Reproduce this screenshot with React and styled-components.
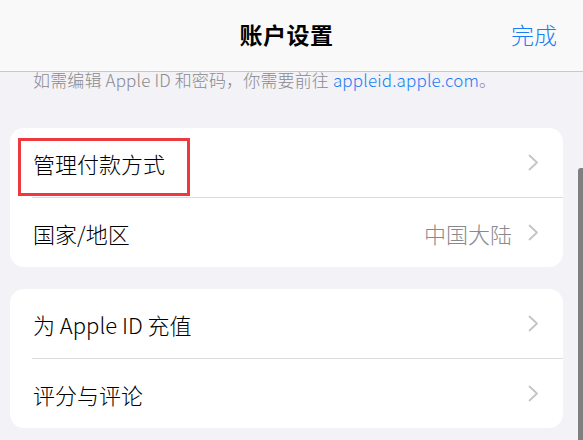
import React from 'react';
import styled, { createGlobalStyle } from 'styled-components';

const GlobalStyle = createGlobalStyle`
  html, body {
    margin: 0;
    padding: 0;
    background: #f2f2f7;
    overflow: hidden;
  }
  body {
    font-family: "Noto Sans CJK SC", Inter, "Noto Sans", sans-serif;
    -webkit-font-smoothing: antialiased;
  }
`;

const groups = [
  [
    { label: '管理付款方式', marked: true },
    { label: '国家/地区', value: '中国大陆' },
  ],
  [
    { label: '为 Apple ID 充值' },
    { label: '评分与评论' },
  ],
];

const Chevron = () => (
  <svg width="11" height="17" viewBox="0 0 11 17" fill="none">
    <path d="M1.5 1.5 L9 8.5 L1.5 15.5" stroke="#c4c4c7" strokeWidth="1.8" strokeLinecap="round" strokeLinejoin="round" />
  </svg>
);

const App = () => {
  const groupList = groups.map((rows, gi) => (
    <Card key={gi}>
      {rows.map((row, ri) => (
        <Row key={ri} $first={ri === 0}>
          <Label>{row.label}</Label>
          {row.value ? <Value>{row.value}</Value> : null}
          <Chevron />
          {row.marked ? <Highlight /> : null}
        </Row>
      ))}
    </Card>
  ));

  return (
    <Page>
      <GlobalStyle />
      <NavBar>
        <span />
        <Title>账户设置</Title>
        <Done>完成</Done>
      </NavBar>
      <Footnote>
        如需编辑 Apple ID 和密码，你需要前往 <a>appleid.apple.com</a>。
      </Footnote>
      <Groups>{groupList}</Groups>
      <ScrollThumb />
    </Page>
  );
};

const Page = styled.div`
  position: relative;
  width: 583px;
  height: 440px;
  overflow: hidden;
  background: #f2f2f7;
`;

const NavBar = styled.div`
  display: grid;
  grid-template-columns: 1fr auto 1fr;
  align-items: center;
  height: 71px;
  padding: 0 26px 0 16px;
  background: #f9f9f9;
  border-bottom: 1px solid #c8c8cc;
`;

const Title = styled.h1`
  margin: 0;
  font-size: 23px;
  font-weight: 700;
  color: #000;
  letter-spacing: 0.5px;
  line-height: 1;
  padding-bottom: 2px;
`;

const Done = styled.a`
  justify-self: end;
  font-size: 23px;
  font-weight: 300;
  color: #1a7df5;
  line-height: 1;
  padding-bottom: 2px;
`;

const Footnote = styled.p`
  margin: 0;
  padding: 0 20px 0 33px;
  font-size: 17px;
  font-weight: 300;
  line-height: 16px;
  color: #8a8a8e;
  letter-spacing: 0.15px;
  white-space: nowrap;
  a {
    color: #1a7df5;
  }
`;

const Groups = styled.div`
  display: flex;
  flex-direction: column;
  gap: 22px;
  margin: 40px 20px 0 10px;
`;

const Card = styled.ul`
  margin: 0;
  padding: 0 0 0 22px;
  list-style: none;
  background: #fff;
  border-radius: 14px;
`;

const Row = styled.li`
  position: relative;
  display: flex;
  align-items: center;
  height: ${p => (p.$first ? '69px' : '70px')};
  padding-right: 24px;
  border-top: ${p => (p.$first ? 'none' : '1px solid #dcdce0')};
  box-sizing: border-box;
`;

const Label = styled.span`
  flex: 1;
  font-size: 22px;
  font-weight: 300;
  color: #000;
  line-height: 1;
  padding-left: 1px;
`;

const Value = styled.span`
  font-size: 22px;
  font-weight: 300;
  color: #8a8a8e;
  line-height: 1;
  margin-right: 16px;
`;

const Highlight = styled.div`
  position: absolute;
  left: -14px;
  top: 10px;
  width: 172px;
  height: 58px;
  border: 3px solid #ee3a3f;
  box-sizing: border-box;
  pointer-events: none;
`;

const ScrollThumb = styled.div`
  position: absolute;
  right: 0;
  top: 168px;
  width: 5px;
  height: 300px;
  background: #7f7f7f;
  border-radius: 3px 0 0 0;
`;

export default App;
